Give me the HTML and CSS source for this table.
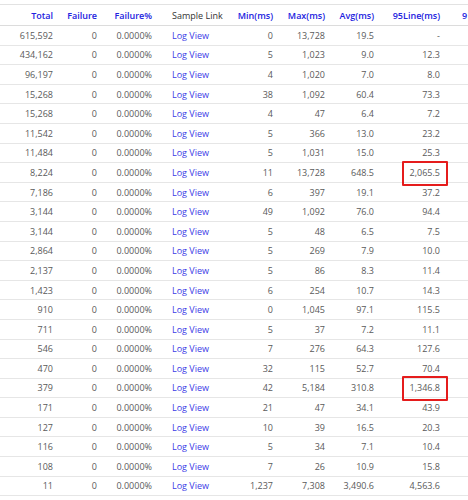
FILE: index.html
```html
<!DOCTYPE html>
<html>
<head>
<meta charset="utf-8">
<link rel="stylesheet" href="styles.css">
</head>
<body>
<div class="wrap">
<table class="report">
<colgroup>
<col class="c-total"><col class="c-fail"><col class="c-failp"><col class="c-link"><col class="c-min"><col class="c-max"><col class="c-avg"><col class="c-95"><col class="c-99">
</colgroup>
<thead>
<tr><th>Total</th><th>Failure</th><th>Failure%</th><th class="plain">Sample Link</th><th>Min(ms)</th><th>Max(ms)</th><th>Avg(ms)</th><th>95Line(ms)</th><th class="first">9</th></tr>
</thead>
<tbody>
<tr><td>615,592</td><td>0</td><td>0.0000%</td><td class="link"><a>Log View</a></td><td>0</td><td>13,728</td><td>19.5</td><td>-</td><td></td></tr>
<tr><td>434,162</td><td>0</td><td>0.0000%</td><td class="link"><a>Log View</a></td><td>5</td><td>1,023</td><td>9.0</td><td>12.3</td><td></td></tr>
<tr><td>96,197</td><td>0</td><td>0.0000%</td><td class="link"><a>Log View</a></td><td>4</td><td>1,020</td><td>7.0</td><td>8.0</td><td></td></tr>
<tr><td>15,268</td><td>0</td><td>0.0000%</td><td class="link"><a>Log View</a></td><td>38</td><td>1,092</td><td>60.4</td><td>73.3</td><td></td></tr>
<tr><td>15,268</td><td>0</td><td>0.0000%</td><td class="link"><a>Log View</a></td><td>4</td><td>47</td><td>6.4</td><td>7.2</td><td></td></tr>
<tr><td>11,542</td><td>0</td><td>0.0000%</td><td class="link"><a>Log View</a></td><td>5</td><td>366</td><td>13.0</td><td>23.2</td><td></td></tr>
<tr><td>11,484</td><td>0</td><td>0.0000%</td><td class="link"><a>Log View</a></td><td>5</td><td>1,031</td><td>15.0</td><td>25.3</td><td></td></tr>
<tr><td>8,224</td><td>0</td><td>0.0000%</td><td class="link"><a>Log View</a></td><td>11</td><td>13,728</td><td>648.5</td><td><span class="mark">2,065.5</span></td><td></td></tr>
<tr><td>7,186</td><td>0</td><td>0.0000%</td><td class="link"><a>Log View</a></td><td>6</td><td>397</td><td>19.1</td><td>37.2</td><td></td></tr>
<tr><td>3,144</td><td>0</td><td>0.0000%</td><td class="link"><a>Log View</a></td><td>49</td><td>1,092</td><td>76.0</td><td>94.4</td><td></td></tr>
<tr><td>3,144</td><td>0</td><td>0.0000%</td><td class="link"><a>Log View</a></td><td>5</td><td>48</td><td>6.5</td><td>7.5</td><td></td></tr>
<tr><td>2,864</td><td>0</td><td>0.0000%</td><td class="link"><a>Log View</a></td><td>5</td><td>269</td><td>7.9</td><td>10.0</td><td></td></tr>
<tr><td>2,137</td><td>0</td><td>0.0000%</td><td class="link"><a>Log View</a></td><td>5</td><td>86</td><td>8.3</td><td>11.4</td><td></td></tr>
<tr><td>1,423</td><td>0</td><td>0.0000%</td><td class="link"><a>Log View</a></td><td>6</td><td>254</td><td>10.7</td><td>14.3</td><td></td></tr>
<tr><td>910</td><td>0</td><td>0.0000%</td><td class="link"><a>Log View</a></td><td>0</td><td>1,045</td><td>97.1</td><td>115.5</td><td></td></tr>
<tr><td>711</td><td>0</td><td>0.0000%</td><td class="link"><a>Log View</a></td><td>5</td><td>37</td><td>7.2</td><td>11.1</td><td></td></tr>
<tr><td>546</td><td>0</td><td>0.0000%</td><td class="link"><a>Log View</a></td><td>7</td><td>276</td><td>64.3</td><td>127.6</td><td></td></tr>
<tr><td>470</td><td>0</td><td>0.0000%</td><td class="link"><a>Log View</a></td><td>32</td><td>115</td><td>52.7</td><td>70.4</td><td></td></tr>
<tr><td>379</td><td>0</td><td>0.0000%</td><td class="link"><a>Log View</a></td><td>42</td><td>5,184</td><td>310.8</td><td><span class="mark">1,346.8</span></td><td></td></tr>
<tr><td>171</td><td>0</td><td>0.0000%</td><td class="link"><a>Log View</a></td><td>21</td><td>47</td><td>34.1</td><td>43.9</td><td></td></tr>
<tr><td>127</td><td>0</td><td>0.0000%</td><td class="link"><a>Log View</a></td><td>10</td><td>39</td><td>16.5</td><td>20.3</td><td></td></tr>
<tr><td>116</td><td>0</td><td>0.0000%</td><td class="link"><a>Log View</a></td><td>5</td><td>34</td><td>7.1</td><td>10.4</td><td></td></tr>
<tr><td>108</td><td>0</td><td>0.0000%</td><td class="link"><a>Log View</a></td><td>7</td><td>26</td><td>10.9</td><td>15.8</td><td></td></tr>
<tr><td>11</td><td>0</td><td>0.0000%</td><td class="link"><a>Log View</a></td><td>1,237</td><td>7,308</td><td>3,490.6</td><td>4,563.6</td><td></td></tr>
</tbody>
</table>
</div>
</body>
</html>
```

FILE: styles.css
```css
html, body {
  margin: 0;
  padding: 0;
  background: #ffffff;
}
body {
  font-family: "Open Sans", "Liberation Sans", sans-serif;
  font-size: 9px;
  color: #5a5a5a;
}
.wrap {
  width: 468px;
  height: 500px;
  overflow: hidden;
  padding-top: 4px;
  box-sizing: border-box;
}
.report {
  width: 468px;
  table-layout: fixed;
  border-collapse: collapse;
  border-top: 1px solid #e2e2e2;
}
.c-total { width: 61px; }
.c-fail { width: 44px; }
.c-failp { width: 55px; }
.c-link { width: 70px; }
.c-min { width: 51px; }
.c-max { width: 52px; }
.c-avg { width: 49px; }
.c-95 { width: 66px; }
.c-99 { width: 20px; }
.report th {
  height: 20px;
  padding: 0 8px 0 0;
  text-align: right;
  font-weight: 600;
  color: #2222e0;
  white-space: nowrap;
  border-bottom: 1px solid #dcdcdc;
}
.report th.plain {
  text-align: left;
  padding-left: 12px;
  font-weight: 400;
  color: #333333;
}
.report th.first {
  text-align: left;
  padding: 0 0 0 14px;
}
.report td {
  height: 18.6px;
  padding: 0 8px 0 0;
  text-align: right;
  white-space: nowrap;
  border-bottom: 1px solid #e6e6e6;
}
.report td.link {
  text-align: left;
  padding-left: 12px;
}
.report td.link a {
  color: #3b3be6;
  text-decoration: none;
}
.mark {
  position: relative;
}
.mark::after {
  content: "";
  position: absolute;
  left: -8px;
  right: -8px;
  top: -5px;
  bottom: -7px;
  border: 2px solid #e51c1c;
  border-radius: 1px;
}
```
